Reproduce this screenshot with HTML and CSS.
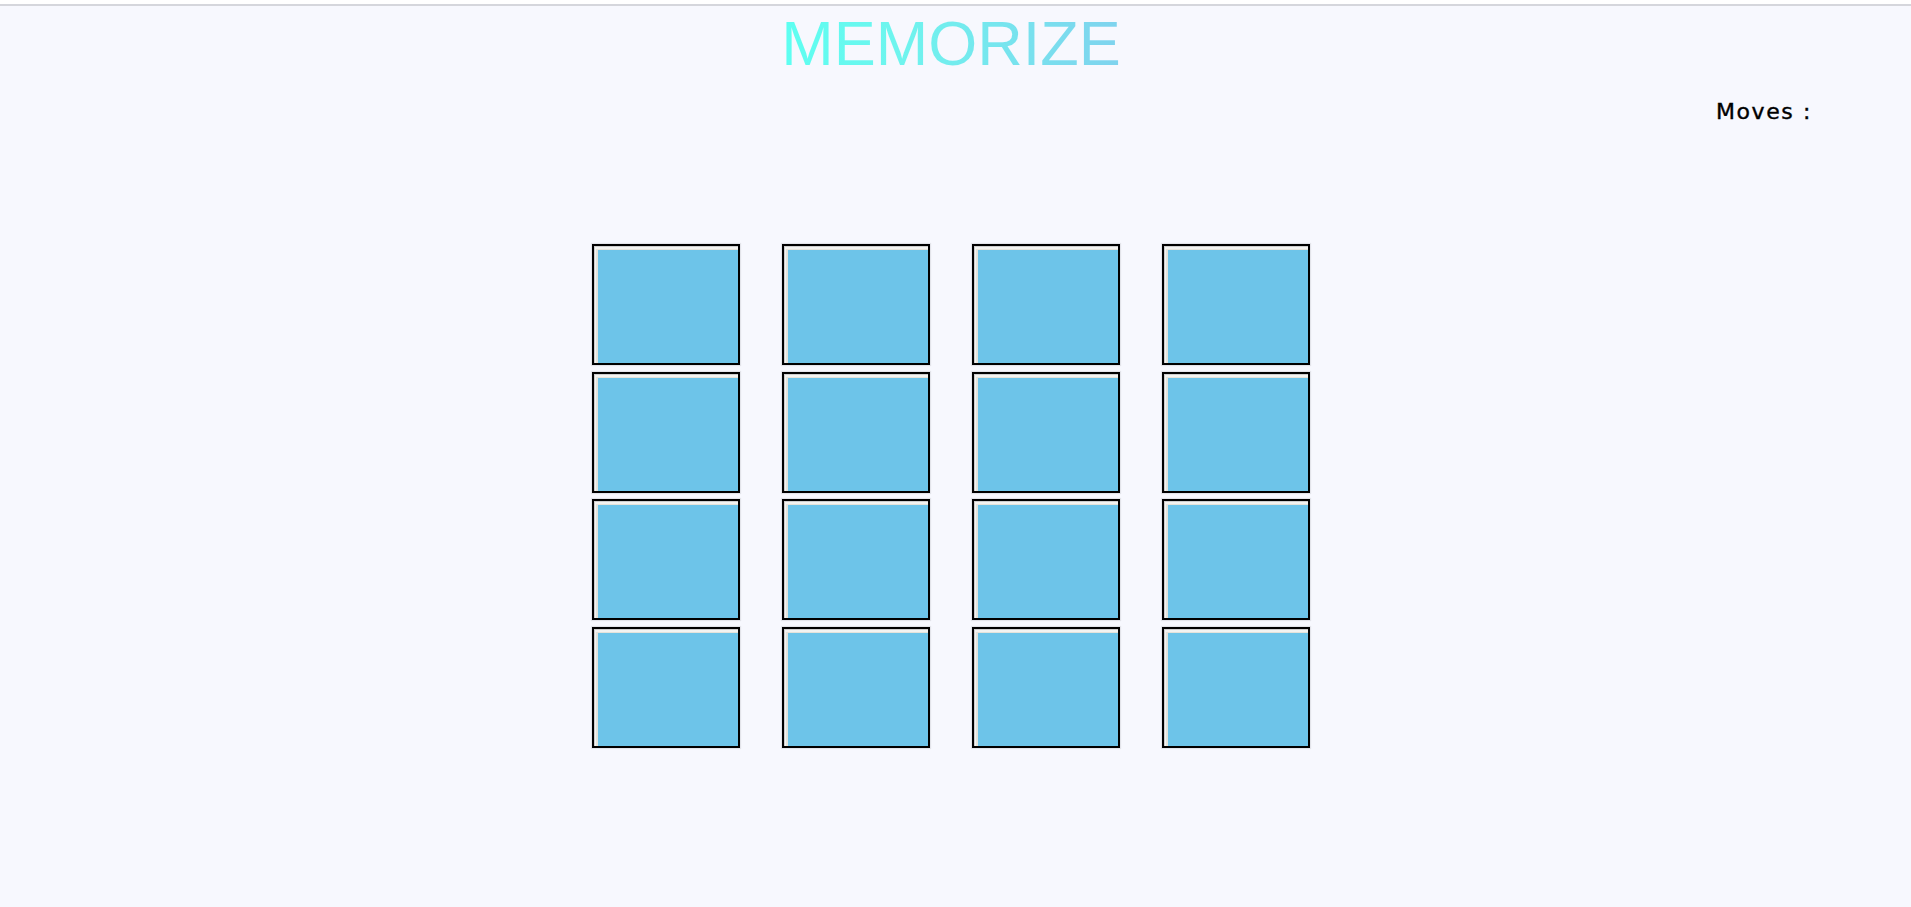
FILE: index.html
```html
<!DOCTYPE html>
<html lang="en">
<head>
<meta charset="utf-8">
<title>Memorize</title>
<link rel="stylesheet" href="styles.css">
</head>
<body>
<div class="topbar"></div>
<main class="page">
  <h1 class="title">MEMORIZE</h1>
  <div class="moves-row"><span class="moves">Moves :</span></div>
  <section class="board">
    <div class="card"></div><div class="card"></div><div class="card"></div><div class="card"></div>
    <div class="card"></div><div class="card"></div><div class="card"></div><div class="card"></div>
    <div class="card"></div><div class="card"></div><div class="card"></div><div class="card"></div>
    <div class="card"></div><div class="card"></div><div class="card"></div><div class="card"></div>
  </section>
</main>
</body>
</html>
```
FILE: styles.css
```css
html, body {
  margin: 0;
  padding: 0;
}
body {
  background: #f7f8fe;
  height: 907px;
  overflow: hidden;
}
.topbar {
  height: 4px;
  background: #ffffff;
  border-bottom: 2px solid #d5d6dc;
}
.page {
  padding-right: 9px;
}
.title {
  margin: 1px auto 0 auto;
  width: 340px;
  text-align: center;
  font-family: "Liberation Sans", Arial, sans-serif;
  font-weight: normal;
  font-size: 63px;
  line-height: 72px;
  background: linear-gradient(to right, #5dfff1 0%, #6ff4ee 35%, #7fd3ee 100%);
  background-size: 336px 100%;
  background-position: center;
  background-repeat: no-repeat;
  -webkit-background-clip: text;
  background-clip: text;
  color: transparent;
}
.moves-row {
  display: flex;
  justify-content: flex-end;
  padding-right: 90px;
  margin-top: 20px;
}
.moves {
  font-family: "DejaVu Sans", sans-serif;
  font-size: 22px;
  line-height: 26px;
  letter-spacing: 1.6px;
  color: #000;
  -webkit-text-stroke: 0.4px #000;
}
.board {
  display: grid;
  grid-template-columns: repeat(4, 148px);
  grid-auto-rows: 121px;
  column-gap: 42px;
  row-gap: 6.67px;
  justify-content: center;
  margin-top: 119px;
}
.card {
  box-sizing: border-box;
  border: 2px solid #000;
  background: #6dc4e9;
  box-shadow:
    inset 1px 1px 0 #cdcdcd,
    inset 2px 3px 0 #f3f3f1,
    inset 4px 4px 0 #e5e3db,
    0 0 1px 1px rgba(0, 0, 0, 0.08);
}
```
